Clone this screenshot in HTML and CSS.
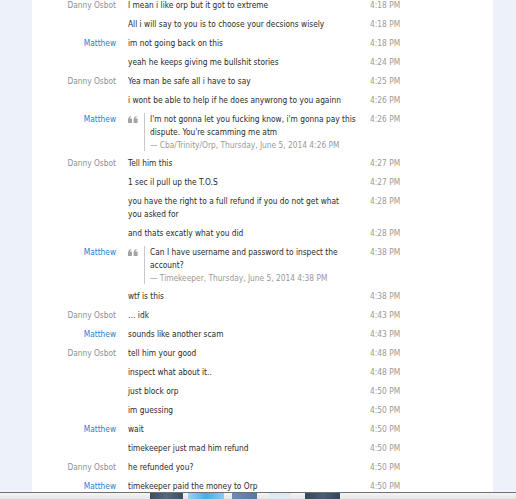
FILE: index.html
```
<!DOCTYPE html>
<html>
<head>
<meta charset="utf-8">
<link rel="stylesheet" href="styles.css">
</head>
<body>
<div class="screen">
  <div class="main">
    <div class="band"></div>
    <div class="panel">
      <div class="log">
        <div class="row"><div class="name danny">Danny Osbot</div><div class="msg">I mean i like orp but it got to extreme</div><div class="time">4:18 PM</div></div>
        <div class="row"><div class="name"></div><div class="msg">All i will say to you is to choose your decsions wisely</div><div class="time">4:18 PM</div></div>
        <div class="row"><div class="name matt">Matthew</div><div class="msg">im not going back on this</div><div class="time">4:18 PM</div></div>
        <div class="row"><div class="name"></div><div class="msg">yeah he keeps giving me bullshit stories</div><div class="time">4:24 PM</div></div>
        <div class="row"><div class="name danny">Danny Osbot</div><div class="msg">Yea man be safe all i have to say</div><div class="time">4:25 PM</div></div>
        <div class="row"><div class="name"></div><div class="msg">i wont be able to help if he does anywrong to you againn</div><div class="time">4:26 PM</div></div>
        <div class="row"><div class="name matt">Matthew</div>
          <div class="msg quote">
            <svg class="qicon" width="10" height="7" viewBox="0 0 10 7"><path d="M0 3.2 Q0.3 0.4 3 0 L3.2 1 Q1.9 1.4 1.7 2.6 L4 2.6 L4 7 L0 7 Z M5.6 3.2 Q5.9 0.4 8.6 0 L8.8 1 Q7.5 1.4 7.3 2.6 L9.6 2.6 L9.6 7 L5.6 7 Z" fill="#a3a3a3"/></svg>
            <div class="qbody">
              <div class="qtext">I'm not gonna let you fucking know, i'm gonna pay this<br>dispute. You're scamming me atm</div>
              <div class="qsrc">— Cba/Trinity/Orp, Thursday, June 5, 2014 4:26 PM</div>
            </div>
          </div>
          <div class="time">4:26 PM</div></div>
        <div class="row"><div class="name danny">Danny Osbot</div><div class="msg">Tell him this</div><div class="time">4:27 PM</div></div>
        <div class="row"><div class="name"></div><div class="msg">1 sec il pull up the T.O.S</div><div class="time">4:27 PM</div></div>
        <div class="row"><div class="name"></div><div class="msg">you have the right to a full refund if you do not get what<br>you asked for</div><div class="time">4:28 PM</div></div>
        <div class="row"><div class="name"></div><div class="msg">and thats excatly what you did</div><div class="time">4:28 PM</div></div>
        <div class="row"><div class="name matt">Matthew</div>
          <div class="msg quote">
            <svg class="qicon" width="10" height="7" viewBox="0 0 10 7"><path d="M0 3.2 Q0.3 0.4 3 0 L3.2 1 Q1.9 1.4 1.7 2.6 L4 2.6 L4 7 L0 7 Z M5.6 3.2 Q5.9 0.4 8.6 0 L8.8 1 Q7.5 1.4 7.3 2.6 L9.6 2.6 L9.6 7 L5.6 7 Z" fill="#a3a3a3"/></svg>
            <div class="qbody">
              <div class="qtext">Can I have username and password to inspect the<br>account?</div>
              <div class="qsrc">— Timekeeper, Thursday, June 5, 2014 4:38 PM</div>
            </div>
          </div>
          <div class="time">4:38 PM</div></div>
        <div class="row"><div class="name"></div><div class="msg">wtf is this</div><div class="time">4:38 PM</div></div>
        <div class="row"><div class="name danny">Danny Osbot</div><div class="msg">… idk</div><div class="time">4:43 PM</div></div>
        <div class="row"><div class="name matt">Matthew</div><div class="msg">sounds like another scam</div><div class="time">4:43 PM</div></div>
        <div class="row"><div class="name danny">Danny Osbot</div><div class="msg">tell him your good</div><div class="time">4:48 PM</div></div>
        <div class="row"><div class="name"></div><div class="msg">inspect what about it..</div><div class="time">4:48 PM</div></div>
        <div class="row"><div class="name"></div><div class="msg">just block orp</div><div class="time">4:50 PM</div></div>
        <div class="row"><div class="name"></div><div class="msg">im guessing</div><div class="time">4:50 PM</div></div>
        <div class="row"><div class="name matt">Matthew</div><div class="msg">wait</div><div class="time">4:50 PM</div></div>
        <div class="row"><div class="name"></div><div class="msg">timekeeper just mad him refund</div><div class="time">4:50 PM</div></div>
        <div class="row"><div class="name danny">Danny Osbot</div><div class="msg">he refunded you?</div><div class="time">4:50 PM</div></div>
        <div class="row"><div class="name matt">Matthew</div><div class="msg">timekeeper paid the money to Orp</div><div class="time">4:50 PM</div></div>
      </div>
    </div>
    <div class="band"></div>
  </div>
  <div class="taskbar">
    <div class="tb tb-dark"></div>
    <div class="tb tb-sky"></div>
    <div class="tb tb-blue"></div>
    <div class="tb tb-pale"></div>
    <div class="tb tb-dark2"></div>
  </div>
</div>
</body>
</html>
```
FILE: styles.css
```
html, body {
  margin: 0;
  padding: 0;
  width: 516px;
  height: 499px;
  overflow: hidden;
  background: #fff;
}
.screen {
  display: flex;
  flex-direction: column;
  width: 516px;
  height: 499px;
  font-family: "DejaVu Sans Condensed", "DejaVu Sans", sans-serif;
  font-stretch: condensed;
  font-size: 8.3px;
}
.main {
  display: grid;
  grid-template-columns: 32px 461px 23px;
  height: 492px;
  overflow: hidden;
}
.band {
  background: #edf2fa;
}
.panel {
  background: #fff;
  overflow: hidden;
}
.log {
  margin-top: -4px;
}
.row {
  display: grid;
  grid-template-columns: 84px 230px 119px;
  column-gap: 12px;
  padding: 3px 0;
  line-height: 13px;
}
.name {
  text-align: right;
  white-space: nowrap;
}
.danny { color: #8f8f8f; }
.matt { color: #1b80d4; }
.msg {
  color: #2a2a2a;
  white-space: nowrap;
}
.time {
  color: #9a9a9a;
  white-space: nowrap;
}
.quote {
  display: flex;
  align-items: flex-start;
}
.qicon {
  margin-top: 3px;
  width: 10px;
  flex: none;
}
.qbody {
  margin-left: 6px;
  border-left: 1px solid #c8c8c8;
  padding-left: 5px;
}
.qtext {
  color: #2a2a2a;
}
.qsrc {
  color: #9a9a9a;
  line-height: 12px;
}
.taskbar {
  height: 6px;
  border-top: 1px solid #707070;
  background: linear-gradient(#f4f4f4, #e6e6e6);
  display: flex;
  padding-left: 150px;
  gap: 0;
}
.tb { height: 6px; }
.tb-dark { width: 33px; background: linear-gradient(90deg, #3d4d60, #56687c, #3d4d60); }
.tb-sky { width: 36px; margin-left: 5px; background: linear-gradient(90deg, #9cd3f0, #43aee6, #8ccbee); }
.tb-blue { width: 25px; margin-left: 8px; background: linear-gradient(90deg, #6d8db3, #5677a0); }
.tb-pale { width: 22px; margin-left: 12px; background: #dfe9f2; }
.tb-dark2 { width: 35px; margin-left: 14px; background: linear-gradient(90deg, #34465a, #4b5d70, #34465a); }
```
